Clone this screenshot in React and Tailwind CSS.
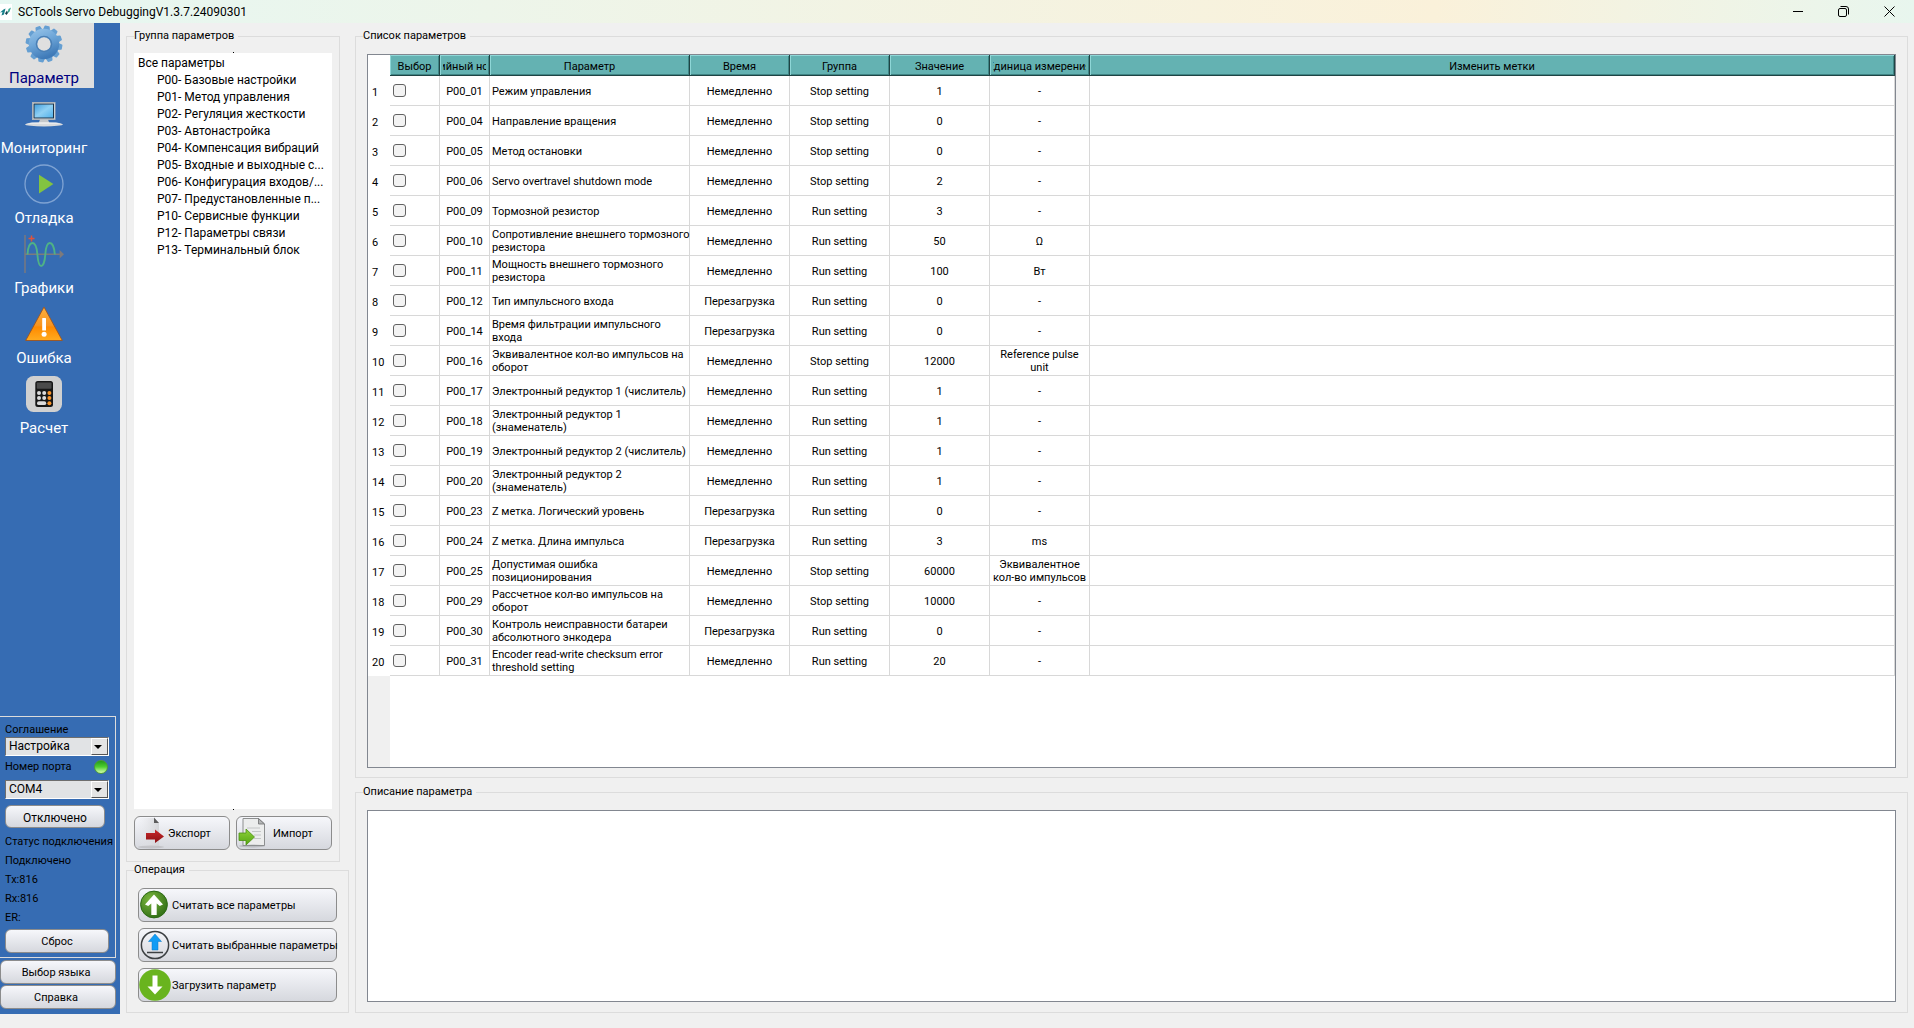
import { useState } from 'react';

const GROUPS = [
  'P00- Базовые настройки',
  'P01- Метод управления',
  'P02- Регуляция жесткости',
  'P03- Автонастройка',
  'P04- Компенсация вибраций',
  'P05- Входные и выходные с...',
  'P06- Конфигурация входов/...',
  'P07- Предустановленные п...',
  'P10- Сервисные функции',
  'P12- Параметры связи',
  'P13- Терминальный блок',
];

const NOW = 'Немедленно';
const REBOOT = 'Перезагрузка';
const STOP = 'Stop setting';
const RUN = 'Run setting';

// code, name, time, group, value, unit
const PARAMS = [
  ['P00_01', 'Режим управления', NOW, STOP, '1', '-'],
  ['P00_04', 'Направление вращения', NOW, STOP, '0', '-'],
  ['P00_05', 'Метод остановки', NOW, STOP, '0', '-'],
  ['P00_06', 'Servo overtravel shutdown mode', NOW, STOP, '2', '-'],
  ['P00_09', 'Тормозной резистор', NOW, RUN, '3', '-'],
  ['P00_10', 'Сопротивление внешнего тормозного\nрезистора', NOW, RUN, '50', 'Ω'],
  ['P00_11', 'Мощность внешнего тормозного\nрезистора', NOW, RUN, '100', 'Вт'],
  ['P00_12', 'Тип импульсного входа', REBOOT, RUN, '0', '-'],
  ['P00_14', 'Время фильтрации импульсного\nвхода', REBOOT, RUN, '0', '-'],
  ['P00_16', 'Эквивалентное кол-во импульсов на\nоборот', NOW, STOP, '12000', 'Reference pulse unit'],
  ['P00_17', 'Электронный редуктор 1 (числитель)', NOW, RUN, '1', '-'],
  ['P00_18', 'Электронный редуктор 1\n(знаменатель)', NOW, RUN, '1', '-'],
  ['P00_19', 'Электронный редуктор 2 (числитель)', NOW, RUN, '1', '-'],
  ['P00_20', 'Электронный редуктор 2\n(знаменатель)', NOW, RUN, '1', '-'],
  ['P00_23', 'Z метка. Логический уровень', REBOOT, RUN, '0', '-'],
  ['P00_24', 'Z метка. Длина импульса', REBOOT, RUN, '3', 'ms'],
  ['P00_25', 'Допустимая ошибка\nпозиционирования', NOW, STOP, '60000', 'Эквивалентное кол-во импульсов'],
  ['P00_29', 'Рассчетное кол-во импульсов на\nоборот', NOW, STOP, '10000', '-'],
  ['P00_30', 'Контроль неисправности батареи\nабсолютного энкодера', REBOOT, RUN, '0', '-'],
  ['P00_31', 'Encoder read-write checksum error\nthreshold setting', NOW, RUN, '20', '-'],
];

const HEADERS = [
  'Выбор',
  'Серийный номер',
  'Параметр',
  'Время',
  'Группа',
  'Значение',
  'Единица измерения',
  'Изменить метки',
];

const TEETH = [0, 30, 60, 90, 120, 150, 180, 210, 240, 270, 300, 330];

const GearIcon = () => (
  <svg width="38" height="38" viewBox="0 0 38 38">
    <defs>
      <linearGradient id="gear" x1="0" y1="0" x2="0.4" y2="1">
        <stop offset="0" stopColor="#9ac6ea" />
        <stop offset="0.5" stopColor="#6ea6d8" />
        <stop offset="1" stopColor="#3f7ab8" />
      </linearGradient>
    </defs>
    <g fill="#659fd2">
      {TEETH.map((a) => (
        <path key={a} d="M15.2 6 L16.4 1.2 Q16.6 0.6 17.2 0.6 H20.8 Q21.4 0.6 21.6 1.2 L22.8 6 Z" transform={`rotate(${a + 10} 19 19)`} />
      ))}
    </g>
    <path
      fillRule="evenodd"
      fill="url(#gear)"
      d="M19 3.8a15.2 15.2 0 1 0 0 30.4a15.2 15.2 0 1 0 0-30.4Z M19 12.2a6.8 6.8 0 1 1 0 13.6a6.8 6.8 0 1 1 0-13.6Z"
    />
    <circle cx="19" cy="19" r="7.6" fill="none" stroke="#4a7fb5" strokeWidth="1.4" />
  </svg>
);

const MonitorIcon = () => (
  <svg width="38" height="26" viewBox="0 0 38 26">
    <defs>
      <linearGradient id="screen" x1="0" y1="0" x2="1" y2="1">
        <stop offset="0" stopColor="#3f9bdc" />
        <stop offset="0.5" stopColor="#8fd0f4" />
        <stop offset="1" stopColor="#4fb0ea" />
      </linearGradient>
    </defs>
    <rect x="7.5" y="1.5" width="22.5" height="17" fill="#e8eaec" stroke="#aeb4ba" />
    <rect x="9" y="3" width="19.5" height="14" fill="url(#screen)" stroke="#1c3348" />
    <path d="M15 18.5h8l1.5 4h-11Z" fill="#c5c8cb" />
    <ellipse cx="19" cy="23.4" rx="18.8" ry="2" fill="#d9dbdd" />
    <path d="M1 22.6h36l-6-1.2H7Z" fill="#fafafa" />
  </svg>
);

const PlayIcon = () => (
  <svg width="40" height="40" viewBox="0 0 40 40">
    <circle cx="20" cy="20" r="19" fill="none" stroke="#7fa3d3" strokeWidth="1.3" />
    <path d="M15 10.8 L29.4 20 L15 29.4 Z" fill="#82c341" />
  </svg>
);

const ChartIcon = () => (
  <svg width="40" height="40" viewBox="0 0 40 40" fill="none">
    <path d="M1 1v38" stroke="#7d7a7c" strokeWidth="1.4" />
    <path d="M1 20.3h35" stroke="#7d7a7c" strokeWidth="1.4" />
    <path d="M35.6 16 L40 20.3 L35.6 24.6 Z" fill="#7d7a7c" />
    <path
      d="M3.5 20.5C4 12 6 9 8.5 9s4.3 4 4.9 11.5S15.5 32 17.2 32s3.6-4 4.1-11.5S23.5 9 25.8 9s4.5 4 5 11.5"
      stroke="#4fb286"
      strokeWidth="1.9"
    />
    <path d="M4.5 4.5h6M7.5 1.5v6" stroke="#e0533a" strokeWidth="1.5" />
    <path d="M4.5 35h6" stroke="#2f75b0" strokeWidth="1.5" />
  </svg>
);

const WarningIcon = () => (
  <svg width="38" height="36" viewBox="0 0 38 36">
    <defs>
      <linearGradient id="warn" x1="0" y1="0" x2="0" y2="1">
        <stop offset="0" stopColor="#fbb03f" />
        <stop offset="0.55" stopColor="#f8941f" />
        <stop offset="0.6" stopColor="#ff8a00" />
        <stop offset="1" stopColor="#ffab1f" />
      </linearGradient>
    </defs>
    <path d="M19 1 L37.3 34.5 H0.7 Z" fill="url(#warn)" stroke="#9c5420" strokeWidth="0.9" strokeLinejoin="round" />
    <rect x="17.2" y="12" width="3.8" height="12.6" rx="0.6" fill="#fff" />
    <circle cx="19.1" cy="28.2" r="2.5" fill="#fff" />
  </svg>
);

const CalcIcon = () => (
  <svg width="36" height="36" viewBox="0 0 36 36">
    <rect width="36" height="36" rx="7.5" fill="#d0d0d0" />
    <rect x="9.3" y="5" width="17.7" height="26" rx="2.5" fill="#161616" />
    <rect x="10.8" y="6.5" width="14.7" height="6.3" rx="0.8" fill="#4a4a4a" />
    {[17, 22].map((y) => (
      <g key={y}>
        <circle cx="13" cy={y} r="2" fill="#dcdcdc" />
        <circle cx="18.2" cy={y} r="2" fill="#dcdcdc" />
        <circle cx="23.4" cy={y} r="2" fill="#f7932a" />
      </g>
    ))}
    <rect x="11" y="25.3" width="9.2" height="3.8" rx="1.9" fill="#dcdcdc" />
    <circle cx="23.4" cy="27.2" r="2" fill="#f7932a" />
  </svg>
);

const ExportIcon = () => (
  <svg width="30" height="32" viewBox="0 0 30 32" className="shrink-0">
    <defs>
      <linearGradient id="sheet" x1="0" y1="0" x2="1" y2="0">
        <stop offset="0" stopColor="#e6e7ea" stopOpacity="0" />
        <stop offset="1" stopColor="#d4d5d8" />
      </linearGradient>
      <linearGradient id="red" x1="0" y1="0" x2="0" y2="1">
        <stop offset="0" stopColor="#c9282b" />
        <stop offset="1" stopColor="#8c1114" />
      </linearGradient>
    </defs>
    <path d="M0 1h17l5 5v24H0Z" fill="url(#sheet)" />
    <path d="M17 0.5v5.500h5Z" fill="#5c5c5c" />
    <ellipse cx="14" cy="30" rx="13" ry="1.5" fill="#b5b6b9" opacity="0.6" />
    <path d="M9 16h9v-3.500l9 7l-9 6.500v-3.500h-9Z" fill="url(#red)" />
  </svg>
);

const ImportIcon = () => (
  <svg width="28" height="32" viewBox="0 0 28 32" className="shrink-0">
    <defs>
      <linearGradient id="lime" x1="0" y1="0" x2="0" y2="1">
        <stop offset="0" stopColor="#8fd23a" />
        <stop offset="1" stopColor="#55a512" />
      </linearGradient>
    </defs>
    <path d="M5 1.5h15.5l6 5.5v21.5H5Z" fill="#eceded" stroke="#8d8f90" />
    <path d="M20.5 1.5v5.5h6Z" fill="#b4b6b7" stroke="#6e7071" strokeWidth="0.8" />
    <path d="M9 11h13M14 14.5h9M16 18h7M16 21.5h7" stroke="#c4c6c7" />
    <ellipse cx="14" cy="29" rx="13" ry="1.5" fill="#8d8f90" opacity="0.4" />
    <path d="M1 16h7v-4l8.500 8l-8.500 8v-4.500H1Z" fill="url(#lime)" stroke="#4b8f14" strokeWidth="0.8" />
  </svg>
);

const ReadAllIcon = () => (
  <svg width="32" height="32" viewBox="0 0 32 32" className="shrink-0">
    <defs>
      <radialGradient id="green" cx="0.35" cy="0.3" r="0.8">
        <stop offset="0" stopColor="#7ab63c" />
        <stop offset="1" stopColor="#2c6a14" />
      </radialGradient>
    </defs>
    <circle cx="15" cy="15.5" r="13.4" fill="url(#green)" stroke="#2c6a14" />
    <path d="M15 5.5 L24 15.5 L20.8 17 L17.7 14.5 V26 H12.3 V14.5 L9.2 17 L6 15.5 Z" fill="#fff" />
  </svg>
);

const ReadSelectedIcon = () => (
  <svg width="32" height="32" viewBox="0 0 32 32" className="shrink-0">
    <circle cx="16" cy="16" r="13.6" fill="none" stroke="#3c4043" strokeWidth="1.5" />
    <path d="M16 5 L22.5 12.5 H19 V21 H13 V12.5 H9.5 Z" fill="#109cf5" stroke="#0b78c4" strokeWidth="0.5" />
    <path d="M8 23.5h16" stroke="#3c4043" strokeWidth="1.5" />
  </svg>
);

const WriteIcon = () => (
  <svg width="32" height="32" viewBox="0 0 32 32" className="shrink-0">
    <circle cx="16" cy="16" r="15.8" fill="#69b41e" />
    <path d="M13.5 6.5h5v11h5L16 25.5L8.5 17.5h5Z" fill="#fff" />
  </svg>
);

const NAV = [
  ['Параметр', GearIcon],
  ['Мониторинг', MonitorIcon],
  ['Отладка', PlayIcon],
  ['Графики', ChartIcon],
  ['Ошибка', WarningIcon],
  ['Расчет', CalcIcon],
];

const BUTTON = 'border border-[#8c8c8c] rounded-md bg-linear-to-b from-[#f6f7fb] to-[#d6d8de] text-black';

const Combo = ({ id, value, className }) => (
  <div className={`relative h-[19px] border border-t-[#6e6e6e] border-l-[#6e6e6e] border-r-white border-b-white ${className}`}>
    <select id={id} defaultValue={value} className="block h-full w-full appearance-none bg-[#e1e3e5] pb-0.5 pl-[3px] text-[12px] leading-[14px] text-black">
      <option>{value}</option>
    </select>
    <span className="pointer-events-none absolute top-0 right-0 flex h-full w-[17px] items-center justify-center border border-t-white border-r-[#555] border-b-[#555] border-l-white bg-[#e4e4e4] pr-1">
      <svg width="8" height="4" viewBox="0 0 8 4">
        <path d="M0 0h8L4 4Z" fill="#000" />
      </svg>
    </span>
  </div>
);

const Group = ({ title, className, children }) => (
  <fieldset className={`flex min-w-0 flex-col border border-[#dcdcdc] px-[7px] ${className}`}>
    <legend className="pr-1 text-[11px] leading-4">{title}</legend>
    {children}
  </fieldset>
);

const Sidebar = () => {
  const [active, setActive] = useState('Параметр');

  return (
    <aside className="flex w-[120px] shrink-0 flex-col bg-[#366cb3]">
      <nav className="flex flex-col gap-[5px]">
        {NAV.map(([label, Icon]) => (
          <button
            key={label}
            type="button"
            onClick={() => setActive(label)}
            className={`flex w-[94px] flex-col items-center pr-1.5 text-[15px] leading-5 ${
              active === label ? 'bg-[#dfdfdf] text-[#000080]' : 'text-white'
            }`}
          >
            <span className="flex h-[45px] items-center pb-[3px]">
              <Icon />
            </span>
            {label}
          </button>
        ))}
      </nav>

      {/* Подключение */}
      <div className="mt-auto mr-1 mb-0.5 flex flex-col border border-l-0 border-[#dcdcdc] pt-1.5 pr-1.5 pb-1 pl-[5px] text-[11px]">
        <label htmlFor="agreement" className="leading-[14px]">Соглашение</label>
        <Combo id="agreement" value="Настройка" className="" />
        <div className="mt-[3px] flex items-center justify-between leading-4">
          <label htmlFor="port">Номер порта</label>
          <span className="mr-px size-3.5 rounded-full border border-[#4d9a3a] bg-linear-to-b from-[#1f9a1a] via-[#4fd030] to-[#d2ffa8]" />
        </div>
        <Combo id="port" value="COM4" className="mt-[5px]" />
        <button type="button" className={`mt-1.5 mr-1 h-[23px] pt-0.5 text-[12px] ${BUTTON}`}>Отключено</button>
        <div className="mt-1 leading-[19px] whitespace-nowrap">
          <p>Статус подключения</p>
          <p>Подключено</p>
          <p>Tx:816</p>
          <p>Rx:816</p>
          <p>ER:</p>
        </div>
        <button type="button" className={`mt-0.5 h-6 pt-0.5 ${BUTTON}`}>Сброс</button>
      </div>
      <div className="mr-1 mb-[5px] flex flex-col gap-px text-[11px]">
        <button type="button" className={`h-6 pt-0.5 pr-1 ${BUTTON}`}>Выбор языка</button>
        <button type="button" className={`h-6 pt-0.5 pr-1 ${BUTTON}`}>Справка</button>
      </div>
    </aside>
  );
};

const ParamTable = () => (
  <div className="mx-1 flex flex-1 flex-col border border-[#828790] bg-white">
    <table className="w-full table-fixed border-separate border-spacing-0 text-[11px] leading-[13px]">
      <colgroup>
        <col className="w-[22px]" />
        <col className="w-[50px]" />
        <col className="w-[50px]" />
        <col className="w-[200px]" />
        <col className="w-[100px]" />
        <col className="w-[100px]" />
        <col className="w-[100px]" />
        <col className="w-[100px]" />
        <col />
      </colgroup>
      <thead>
        <tr className="h-[21px]">
          <td />
          {HEADERS.map((h) => (
            <th
              key={h}
              scope="col"
              className="border-r border-b border-[#1f4444] bg-[#64b2b2] p-0 pt-0.5 font-normal shadow-[inset_1px_1px_0_#8ed6d6,inset_-1px_-1px_0_#3f8585]"
            >
              <div className="mx-[3px] flex justify-center overflow-hidden whitespace-nowrap">{h}</div>
            </th>
          ))}
        </tr>
      </thead>
      <tbody>
        {PARAMS.map(([code, name, time, group, value, unit], i) => (
          <tr key={code} className="h-[30px] text-center [&>td]:border-r [&>td]:border-b [&>td]:border-[#d8d8d8] [&>td]:p-0 [&>td]:pt-px">
            <th scope="row" className="p-0 pt-0.5 pl-1 text-left text-[11px] font-normal">{i + 1}</th>
            <td>
              <input
                type="checkbox"
                aria-label={code}
                className="mb-0.5 ml-[3px] block size-[13px] appearance-none rounded-[3px] border border-[#626262] bg-[#f3f3f3] checked:bg-[#0067c0]"
              />
            </td>
            <td>{code}</td>
            <td><div className="pl-0.5 text-left whitespace-pre">{name}</div></td>
            <td>{time}</td>
            <td>{group}</td>
            <td>{value}</td>
            <td>{unit}</td>
            <td />
          </tr>
        ))}
      </tbody>
    </table>
    <div className="w-[22px] flex-1 bg-[#f0f0f0]" />
  </div>
);

const TitleBar = () => (
  <header className="flex h-[23px] items-center bg-linear-to-r from-[#e6f7f2] via-[#faf1da] via-75% to-[#e8f6ee]">
    <svg width="12" height="16" viewBox="0 0 12 16">
      <rect width="12" height="16" fill="#fff" />
      <path d="M0 8.5L3.5 5.5L5.500 4.500L4 10.500L1.500 11.500L2.500 8Z" fill="#17808a" />
      <path d="M5 9.500L7 6.500L8 9L6.500 11Z" fill="#123f4c" />
      <path d="M7.500 9.500L8.500 5L11 3.500L9.500 7.500Z" fill="#35a890" />
    </svg>
    <h1 className="ml-1.5 text-[12px]">SCTools Servo DebuggingV1.3.7.24090301</h1>
    <div className="mr-[19px] ml-auto flex items-center gap-[35px]">
      <button type="button" aria-label="Свернуть">
        <svg width="10" height="11" viewBox="0 0 10 11"><path d="M0 5.5h10" stroke="#000" /></svg>
      </button>
      <button type="button" aria-label="Развернуть">
        <svg width="11" height="11" viewBox="0 0 11 11" fill="none" stroke="#000">
          <rect x="0.5" y="2.5" width="8" height="8" rx="1.5" />
          <path d="M2.5 0.5h5.500a2.500 2.500 0 0 1 2.500 2.500v5.500" />
        </svg>
      </button>
      <button type="button" aria-label="Закрыть">
        <svg width="11" height="11" viewBox="0 0 11 11"><path d="M0.5 0.5l10 10M10.5 0.5l-10 10" stroke="#000" /></svg>
      </button>
    </div>
  </header>
);

const OPERATIONS = [
  ['Считать все параметры', ReadAllIcon],
  ['Считать выбранные параметры', ReadSelectedIcon],
  ['Загрузить параметр', WriteIcon],
];

const App = () => (
  <div className="flex min-h-screen flex-col bg-[#f0f0f0] pb-3.5 font-[Roboto,sans-serif] text-black">
    <TitleBar />
    <div className="flex flex-1">
      <Sidebar />

      <div className="ml-1.5 flex w-[223px] shrink-0 flex-col pt-[5px] pb-px">
        <Group title="Группа параметров" className="mr-[9px] flex-1 pt-[9px] pb-[11px]">
          <div className="relative flex-1 bg-white pt-0.5 pl-1 text-[12px] leading-[17px] before:absolute before:-top-px before:left-1/2 before:size-px before:bg-black after:absolute after:-bottom-px after:left-1/2 after:size-px after:bg-black">
            <p>Все параметры</p>
            <ul className="pl-[19px] whitespace-nowrap">
              {GROUPS.map((g) => (
                <li key={g}>{g}</li>
              ))}
            </ul>
          </div>
          <div className="mt-[7px] grid grid-cols-2 gap-1.5 text-[11px]">
            <button type="button" className={`flex h-[34px] items-center gap-px pl-0.5 ${BUTTON}`}>
              <ExportIcon />
              <span className="pt-0.5">Экспорт</span>
            </button>
            <button type="button" className={`flex h-[34px] items-center gap-[7px] pl-px ${BUTTON}`}>
              <ImportIcon />
              <span className="pt-0.5">Импорт</span>
            </button>
          </div>
        </Group>

        <Group title="Операция" className="pt-2.5 pb-2.5">
          <div className="mx-1 flex flex-col gap-1.5">
            {OPERATIONS.map(([label, Icon]) => (
              <button
                key={label}
                type="button"
                className={`flex h-[34px] items-center gap-px text-[11px] whitespace-nowrap ${BUTTON}`}
              >
                <Icon />
                <span className="pt-0.5">{label}</span>
              </button>
            ))}
          </div>
        </Group>
      </div>

      <main className="mx-1.5 flex min-w-0 flex-1 flex-col gap-1.5 pt-[5px] pb-px">
        <Group title="Список параметров" className="flex-1 pt-2.5 pb-[9px]">
          <ParamTable />
        </Group>
        <Group title="Описание параметра" className="pt-2.5 pb-2.5">
          <textarea aria-label="Описание параметра" className="mx-1 h-48 resize-none border border-[#828790] bg-white p-1 text-[12px] outline-none" />
        </Group>
      </main>
    </div>
  </div>
);

export default App;
